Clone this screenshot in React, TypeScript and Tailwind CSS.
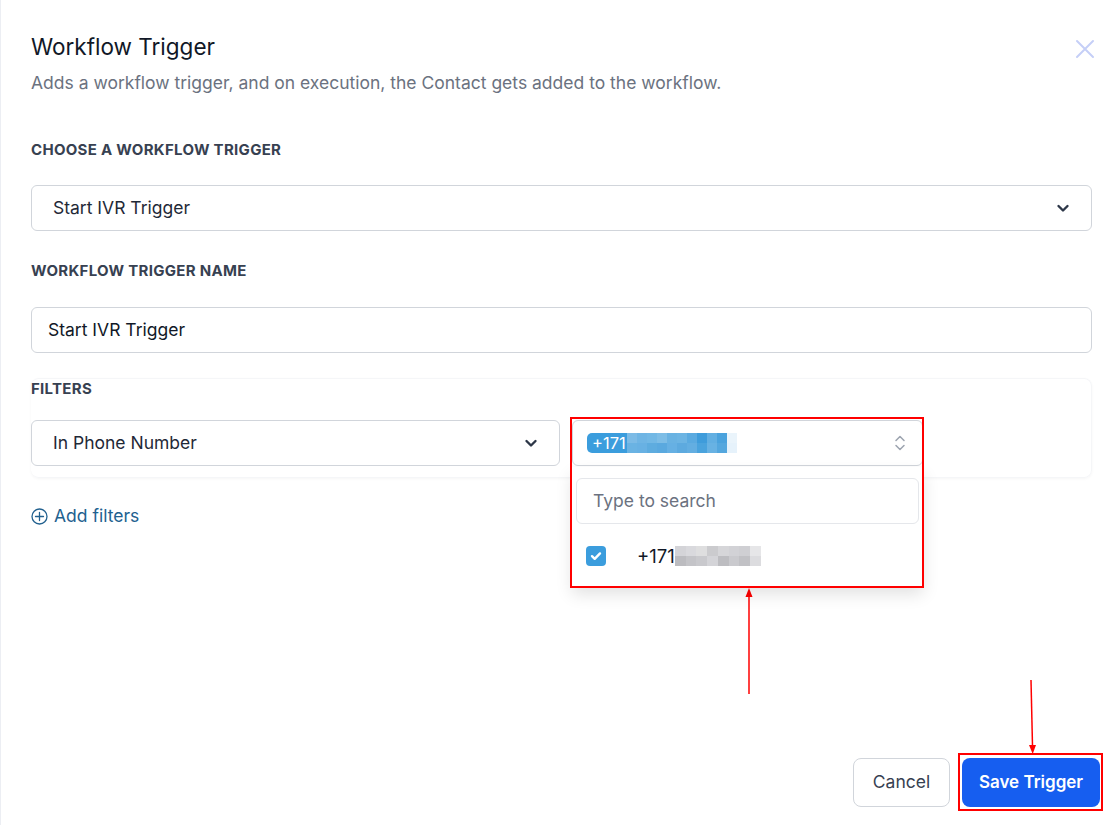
import React from "react";

const Chevron = () => (
  <svg width="14" height="14" viewBox="0 0 14 14" fill="none">
    <path d="M2.5 5l4.5 4.5L11.5 5" stroke="#2d3748" strokeWidth="2.4" strokeLinecap="round" strokeLinejoin="round" />
  </svg>
);

const blueBlocks = [
  ["#7cbbe6", "#6fb5e4", "#72b8e5", "#7dbde6", "#69b2e2", "#6cb4e3", "#5aaae0", "#3e9cdb", "#62afe2", "#4aa2dd", "#eaf4fb"],
  ["#6ab3e3", "#68b1e3", "#5eacdf", "#5aa9df", "#66b0e3", "#5daadf", "#63aee1", "#4aa3dd", "#68b2e3", "#54a7de", "#e6f2fb"],
];

const grayBlocks = [
  ["#d4d4d8", "#d9d9dd", "#dededf", "#cbcbce", "#d6d6d9", "#d2d2d6", "#cfcfd3", "#e6e6e8"],
  ["#bcbcc0", "#c4c4c8", "#c9c9cd", "#d4d4d8", "#bdbdc1", "#cacace", "#c1c1c5", "#dcdcdf"],
];

export default function App() {
  return (
    <div
      className="relative h-[825px] w-[1119px] overflow-hidden bg-white border-l border-[#eceef3]"
      style={{ fontFamily: "Inter, 'Noto Sans', sans-serif" }}
    >
      <div className="pl-[30px] pr-[27px] pt-[33px]">
        <div className="flex items-start justify-between">
          <div>
            <h1 className="text-[22.5px] leading-[28px] text-[#111827] font-normal">Workflow Trigger</h1>
            <p className="mt-[10px] text-[17.5px] leading-[24px] text-[#6b7280]">
              Adds a workflow trigger, and on execution, the Contact gets added to the workflow.
            </p>
          </div>
          <button className="mt-[6px] mr-[-3px]">
            <svg width="20" height="20" viewBox="0 0 20 20" fill="none">
              <path d="M2 2l16 16M18 2L2 18" stroke="#c5cff7" strokeWidth="2" strokeLinecap="round" />
            </svg>
          </button>
        </div>

        <div className="mt-[45px] text-[15px] leading-[20px] font-bold tracking-[0.02em] text-[#374151]">
          CHOOSE A WORKFLOW TRIGGER
        </div>
        <div className="mt-[25px] flex h-[46px] items-center justify-between rounded-[6px] border border-[#d1d5db] pl-[21px] pr-[21px] text-[17.5px] text-[#1f2937]">
          <span>Start IVR Trigger</span>
          <Chevron />
        </div>

        <div className="mt-[30px] text-[15px] leading-[20px] font-bold tracking-[0.02em] text-[#374151]">
          WORKFLOW TRIGGER NAME
        </div>
        <div className="mt-[26px] flex h-[46px] items-center rounded-[6px] border border-[#d1d5db] pl-[16px] text-[17.5px] text-[#111827]">
          Start IVR Trigger
        </div>

        <div className="mt-[25px] rounded-[8px] shadow-[0_1px_3px_rgba(0,0,0,0.04)] border border-[#f5f6f8] border-l-0 pb-[11px]">
          <div className="text-[15px] leading-[20px] font-bold tracking-[0.02em] text-[#374151]">FILTERS</div>
          <div className="mt-[21px] flex gap-[12px]">
            <div className="flex h-[46px] w-[529px] items-center justify-between rounded-[6px] border border-[#d1d5db] pl-[21px] pr-[21px] text-[17.5px] text-[#1f2937]">
              <span>In Phone Number</span>
              <Chevron />
            </div>
            <div className="relative">
              <div className="flex h-[46px] w-[351px] items-center justify-between rounded-[6px] border border-[#d1d5db] pl-[14px] pr-[16px]">
                <div className="flex items-center">
                  <span className="rounded-l-[5px] bg-[#3b9ddd] pl-[5px] pr-[1px] text-[16.5px] leading-[20px] text-white">+171</span>
                  <div className="flex flex-col">
                    {blueBlocks.map((row, i) => (
                      <div key={i} className="flex">
                        {row.map((c, j) => (
                          <div key={j} className="h-[10px] w-[10px]" style={{ backgroundColor: c }} />
                        ))}
                      </div>
                    ))}
                  </div>
                </div>
                <svg width="12" height="18" viewBox="0 0 12 18" fill="none">
                  <path d="M2 6.5L6 2.5l4 4M2 11.5l4 4 4-4" stroke="#9ca3af" strokeWidth="1.5" strokeLinecap="round" strokeLinejoin="round" />
                </svg>
              </div>
              <div className="absolute left-0 top-[47px] z-10 w-[351px] bg-white px-[4px] pt-[11px] pb-[20px] shadow-[0_8px_16px_rgba(0,0,0,0.12)]">
                <div className="flex h-[46px] items-center rounded-[6px] border border-[#e5e7eb] pl-[16px] text-[17.5px] text-[#6b7280]">
                  Type to search
                </div>
                <div className="mt-[22px] flex items-center pl-[10px]">
                  <span className="flex h-[20px] w-[20px] items-center justify-center rounded-[4px] bg-[#3b9ddd]">
                    <svg width="14" height="14" viewBox="0 0 14 14" fill="none">
                      <path d="M3 7.2l2.7 2.6L11 4.4" stroke="white" strokeWidth="2.4" strokeLinecap="round" strokeLinejoin="round" />
                    </svg>
                  </span>
                  <span className="ml-[31px] text-[18.5px] leading-[20px] text-[#111827]">+171</span>
                  <div className="flex flex-col">
                    {grayBlocks.map((row, i) => (
                      <div key={i} className="flex">
                        {row.map((c, j) => (
                          <div key={j} className="h-[10px] w-[10.75px]" style={{ backgroundColor: c }} />
                        ))}
                      </div>
                    ))}
                  </div>
                </div>
              </div>
              <div className="pointer-events-none absolute left-[-2px] top-[-3px] z-20 h-[171px] w-[354px] border-2 border-[#ff0000]" />
            </div>
          </div>
        </div>

        <div className="mt-[25px] flex items-center text-[17.5px] text-[#22618f]">
          <svg width="17" height="17" viewBox="0 0 17 17" fill="none" className="mr-[6px]">
            <circle cx="8.5" cy="8.5" r="7.5" stroke="#22618f" strokeWidth="1.3" />
            <path d="M8.5 4.5v8M4.5 8.5h8" stroke="#22618f" strokeWidth="1.3" strokeLinecap="round" />
          </svg>
          Add filters
        </div>
      </div>

      <div className="absolute bottom-[18px] right-[19px] flex gap-[12px]">
        <button className="h-[49px] w-[97px] rounded-[8px] border border-[#d1d5db] bg-white text-[17.5px] text-[#374151]">
          Cancel
        </button>
        <div className="relative">
          <button className="h-[49px] w-[138px] rounded-[8px] bg-[#165ef0] text-[17px] font-semibold text-white">
            Save Trigger
          </button>
          <div className="pointer-events-none absolute left-[-4px] top-[-5px] h-[58px] w-[145px] border-2 border-[#ff0000]" />
        </div>
      </div>

      {/* annotation arrows */}
      <svg className="pointer-events-none absolute left-0 top-0" width="1119" height="825">
        <line x1="748" y1="694" x2="748" y2="596" stroke="#ff0000" strokeWidth="1.5" />
        <path d="M744.5 597l3.5-9 3.5 9z" fill="#ff0000" />
        <line x1="1030" y1="680" x2="1031.5" y2="746" stroke="#ff0000" strokeWidth="1.5" />
        <path d="M1028 745l3.7 9 3.3-9z" fill="#ff0000" />
      </svg>
    </div>
  );
}
